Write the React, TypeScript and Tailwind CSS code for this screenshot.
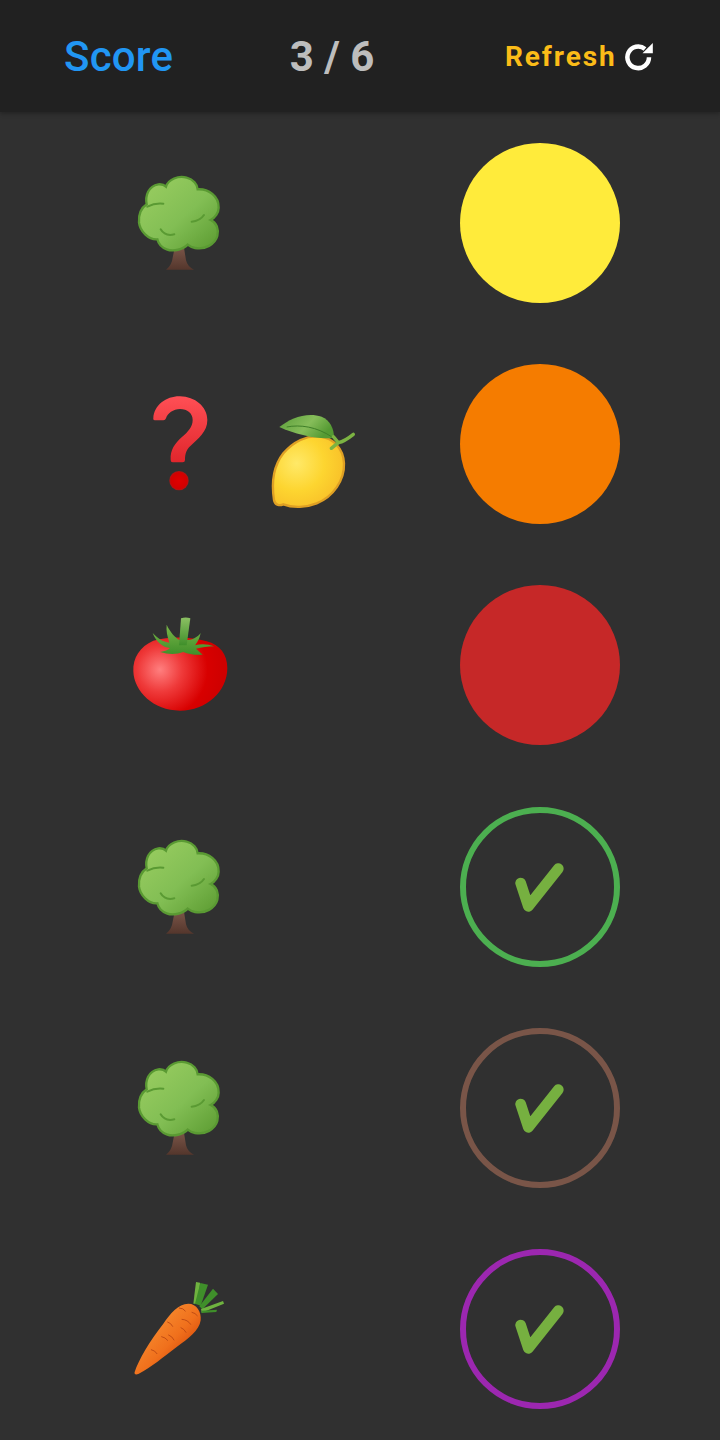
const FONT = "font-['Roboto',sans-serif]";

function Tree() {
  return (
    <svg viewBox="30 21 300 300" className="h-[100px] w-[100px] overflow-visible">
      <defs>
        <linearGradient id="treeFill" x1="0" y1="0" x2="1" y2="1">
          <stop offset="0" stopColor="#9ccf62" />
          <stop offset="0.55" stopColor="#82be54" />
          <stop offset="1" stopColor="#5a9a30" />
        </linearGradient>
        <linearGradient id="treeTrunk" x1="0" y1="0" x2="0" y2="1">
          <stop offset="0" stopColor="#7a5548" />
          <stop offset="1" stopColor="#54362c" />
        </linearGradient>
      </defs>
      <path d="M162 255 L156 285 Q150 303 138 311 L222 311 Q203 303 198 283 L192 245 Z" fill="url(#treeTrunk)" />
      <path
        d="M138 62 C145 40 175 28 200 35 C220 40 232 55 233 70 C265 68 297 90 296 125 C296 140 285 155 272 162 C290 170 297 190 292 210 C285 235 255 252 225 246 C215 244 208 240 203 236 C190 250 160 258 140 250 C125 245 115 232 112 220 C85 222 60 195 57 170 C55 145 65 125 80 115 C75 90 85 60 115 55 C125 54 132 56 138 62 Z"
        fill="url(#treeFill)"
        stroke="#5a9a33"
        strokeWidth="7"
      />
      <g fill="none" stroke="#5a9a33" strokeWidth="6" strokeLinecap="round">
        <path d="M82 122 Q105 110 130 113" />
        <path d="M215 167 Q240 165 252 147" />
        <path d="M122 190 Q135 212 163 205" />
      </g>
    </svg>
  );
}

function Question() {
  return (
    <svg viewBox="0 27 300 300" className="h-[100px] w-[100px] overflow-visible">
      <defs>
        <linearGradient id="qFill" x1="0" y1="0" x2="0" y2="1">
          <stop offset="0" stopColor="#ff4f55" />
          <stop offset="1" stopColor="#e0262c" />
        </linearGradient>
        <radialGradient id="qDot" cx="0.5" cy="0.5" r="0.5">
          <stop offset="0" stopColor="#df0000" />
          <stop offset="0.8" stopColor="#d30000" />
          <stop offset="1" stopColor="#ad1515" />
        </radialGradient>
      </defs>
      <path
        d="M70 100 C72 60 110 33 150 34 C195 35 232 65 232 105 C232 140 205 160 182 182 C170 192 165 205 165 225 Q165 232 158 232 L128 232 Q122 232 122 225 C120 195 135 175 155 157 C175 140 188 125 188 105 C188 85 172 72 150 72 C130 72 112 85 108 100 Q106 106 100 106 L78 106 Q68 106 70 100 Z"
        fill="url(#qFill)"
      />
      <circle cx="147" cy="287" r="29" fill="url(#qDot)" />
    </svg>
  );
}

function Lemon() {
  return (
    <svg viewBox="390 27 300 300" className="h-[100px] w-[100px] overflow-visible">
      <defs>
        <radialGradient id="lemonFill" gradientUnits="userSpaceOnUse" cx="500" cy="235" r="150">
          <stop offset="0" stopColor="#ffe968" />
          <stop offset="0.55" stopColor="#fdd530" />
          <stop offset="1" stopColor="#f8bf28" />
        </radialGradient>
        <linearGradient id="leafFill" x1="0" y1="0" x2="1" y2="0.4">
          <stop offset="0" stopColor="#5b9d3a" />
          <stop offset="0.6" stopColor="#86bd5a" />
          <stop offset="1" stopColor="#559a33" />
        </linearGradient>
      </defs>
      <path
        d="M432 345 C425 300 425 250 460 205 C490 170 530 150 570 155 C610 160 640 190 642 235 C644 285 610 335 560 355 C530 367 490 370 460 358 C450 362 435 362 432 345 Z"
        fill="url(#lemonFill)"
        stroke="#dfa024"
        strokeWidth="7"
      />
      <path d="M448 126 C480 100 530 80 575 95 C600 105 612 130 612 158 C570 165 500 150 448 126 Z" fill="url(#leafFill)" />
      <path d="M470 126 C510 118 560 125 606 156" fill="none" stroke="#3f7f28" strokeWidth="3" />
      <g fill="none" stroke="#7cb342" strokeWidth="10" strokeLinecap="round">
        <path d="M610 155 L625 173 C640 170 655 160 670 148" />
        <path d="M625 173 L604 190" />
      </g>
    </svg>
  );
}

function Tomato() {
  return (
    <svg viewBox="30 31 300 300" className="h-[100px] w-[100px] overflow-visible">
      <defs>
        <radialGradient id="tomatoFill" gradientUnits="userSpaceOnUse" cx="120" cy="195" r="190">
          <stop offset="0" stopColor="#ff7f7f" />
          <stop offset="0.35" stopColor="#ef3a3a" />
          <stop offset="0.75" stopColor="#d80000" />
          <stop offset="1" stopColor="#cf0000" />
        </radialGradient>
        <linearGradient id="tomatoStem" x1="0" y1="0" x2="0" y2="1">
          <stop offset="0" stopColor="#8cc063" />
          <stop offset="1" stopColor="#3f8f2a" />
        </linearGradient>
        <linearGradient id="tomatoLeaf" x1="0" y1="0" x2="0" y2="1">
          <stop offset="0" stopColor="#7ab648" />
          <stop offset="1" stopColor="#3f8f2a" />
        </linearGradient>
      </defs>
      <path
        d="M100 108 C60 125 38 160 40 200 C42 260 100 318 180 318 C260 318 322 260 322 190 C322 150 300 120 260 110 C210 95 150 95 100 108 Z"
        fill="url(#tomatoFill)"
      />
      <path
        d="M98 85 C112 100 128 112 148 114 C142 95 138 78 140 60 C150 82 165 98 178 106 L205 106 C220 105 235 95 242 85 C238 105 230 115 225 122 C245 116 265 118 282 125 C265 126 245 128 228 132 L248 150 C225 152 205 148 190 142 C170 150 145 150 120 142 C135 140 145 136 150 130 C128 128 108 112 98 85 Z"
        fill="url(#tomatoLeaf)"
      />
      <path d="M183 41 Q197 36 211 41 L200 122 L177 122 Z" fill="url(#tomatoStem)" />
    </svg>
  );
}

function Carrot() {
  return (
    <svg viewBox="30 26 300 300" className="h-[100px] w-[100px] overflow-visible">
      <defs>
        <linearGradient id="carrotFill" x1="0.35" y1="0.3" x2="0.75" y2="0.7">
          <stop offset="0" stopColor="#f5842a" />
          <stop offset="0.55" stopColor="#f0701c" />
          <stop offset="1" stopColor="#dc520e" />
        </linearGradient>
      </defs>
      <path d="M220 100 L228 35 L240 37 L236 100 Z" fill="#6fb33f" />
      <path d="M225 100 L241 38 L264 43 L242 106 Z" fill="#3f8f2a" />
      <path d="M238 108 L279 55 L294 71 L247 117 Z" fill="#3f8f2a" />
      <path d="M243 116 L309 92 L312 100 L245 127 Z" fill="#6fb33f" />
      <path d="M245 121 L291 118 L289 125 L245 128 Z" fill="#3f8f2a" />
      <path
        d="M44 305 C55 270 90 210 130 160 C150 130 175 100 205 100 C230 100 245 125 242 150 C238 180 205 205 170 230 C130 260 95 290 55 311 C47 314 42 312 44 305 Z"
        fill="url(#carrotFill)"
      />
      <g fill="none" stroke="#c04c14" strokeWidth="3" strokeLinecap="round">
        <path d="M178 113 Q190 113 196 122" />
        <path d="M216 126 Q226 128 232 136" />
        <path d="M143 155 Q153 158 158 168" />
        <path d="M186 147 Q203 148 212 162" />
        <path d="M183 172 Q193 176 198 186" />
        <path d="M146 194 Q157 198 162 209" />
        <path d="M125 199 Q136 201 143 210" />
        <path d="M94 238 Q105 240 111 250" />
      </g>
    </svg>
  );
}

function Check() {
  return (
    <svg viewBox="0 5 300 270" className="h-[90px] w-[100px]">
      <path
        d="M92 128 L115 198 L205 85"
        fill="none"
        stroke="#76b040"
        strokeWidth="32"
        strokeLinecap="round"
        strokeLinejoin="round"
      />
    </svg>
  );
}

function RefreshIcon() {
  return (
    <svg viewBox="9.5 12 28 30" className="h-[30px] w-7 text-white">
      <path d="M33.5 27.3 A10.8 10.8 0 1 1 29.5 18.9" fill="none" stroke="currentColor" strokeWidth="4.5" />
      <path d="M27 23.3 L37.3 23.3 L37.3 13 Z" fill="currentColor" />
    </svg>
  );
}

function Slot({ children }: { children?: React.ReactNode }) {
  return <div className="flex h-[100px] w-[100px] items-center justify-center">{children}</div>;
}

function Target({ className, done }: { className: string; done?: boolean }) {
  return (
    <div className={`flex h-40 w-40 items-center justify-center rounded-full ${className}`}>
      {done && <Check />}
    </div>
  );
}

const rows = [
  { icon: <Tree />, target: <Target className="bg-[#ffeb3b]" /> },
  { icon: <Question />, extra: <Lemon />, target: <Target className="bg-[#f57c00]" /> },
  { icon: <Tomato />, target: <Target className="bg-[#c62828]" /> },
  { icon: <Tree />, target: <Target className="border-[6px] border-[#4caf50]" done /> },
  { icon: <Tree />, target: <Target className="border-[6px] border-[#795548]" done /> },
  { icon: <Carrot />, target: <Target className="border-[6px] border-[#9c27b0]" done /> },
];

export default function App() {
  return (
    <div className={`flex h-[1440px] w-[720px] flex-col bg-[#303030] ${FONT}`}>
      <header className="z-10 flex h-[112px] shrink-0 items-center bg-[#212121] pt-[2px] shadow-[0_2px_4px_rgba(0,0,0,0.25)]">
        <div className="w-[237px] pl-[64px] text-[42px] font-medium leading-none tracking-[0.2px] text-[#2196f3]">Score</div>
        <div className="w-[190px] text-center text-[42px] font-bold leading-none text-[#bdbdbd]">3 / 6</div>
        <div className="ml-[78px] flex items-center gap-2">
          <span className="text-[28px] font-bold leading-none tracking-[1.9px] text-[#fbbc18]">Refresh</span>
          <RefreshIcon />
        </div>
      </header>
      <main className="flex flex-1 flex-col">
        {rows.map((row, i) => (
          <div key={i} className="grid flex-1 grid-cols-2 items-center">
            <div className="flex items-center gap-[30px] pl-[130px]">
              <Slot>{row.icon}</Slot>
              {row.extra && <Slot>{row.extra}</Slot>}
            </div>
            <div className="flex justify-center">{row.target}</div>
          </div>
        ))}
      </main>
    </div>
  );
}
